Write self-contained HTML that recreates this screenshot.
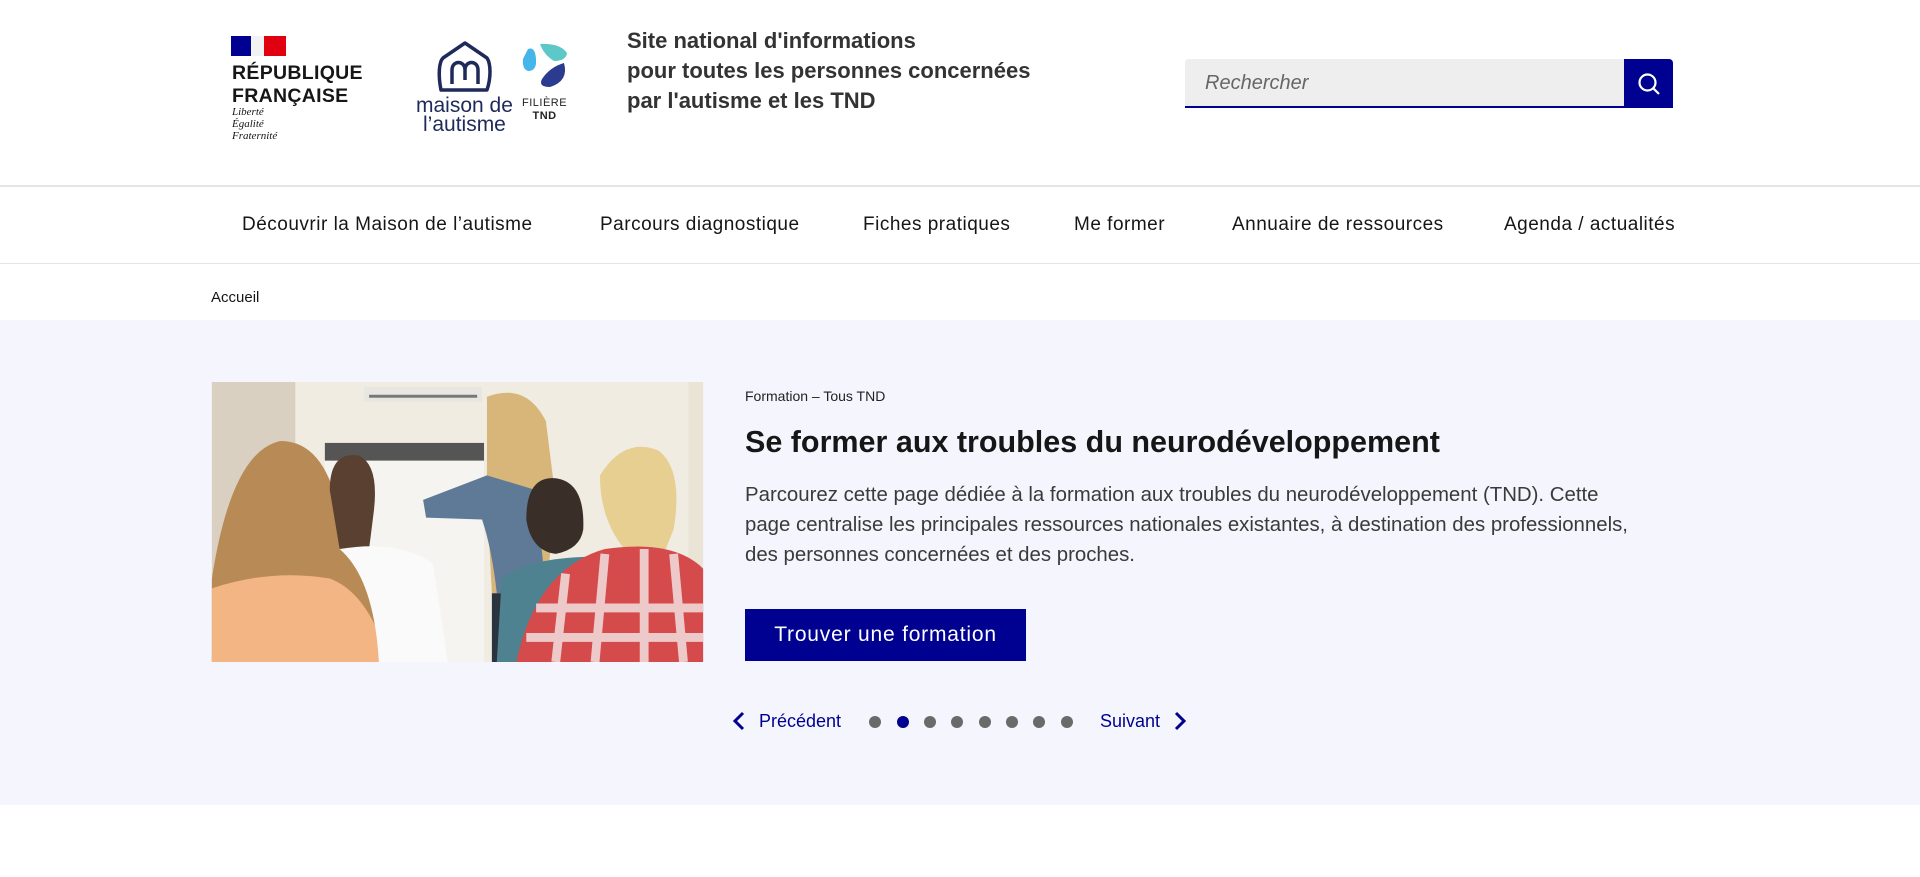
<!DOCTYPE html>
<html><head><meta charset="utf-8"><style>
*{margin:0;padding:0;box-sizing:border-box}
body{width:1920px;height:877px;overflow:hidden;background:#fff;font-family:"Liberation Sans",sans-serif;color:#161616;position:relative}
.a{position:absolute;white-space:nowrap}
.nav{font-size:19px;letter-spacing:.5px;color:#161616;top:214px}
</style></head><body>
<!-- RF logo -->
<div class="a" style="left:231px;top:36px;width:55px;height:20px;background:linear-gradient(90deg,#000091 0 36%,#f2f2f2 36% 60%,#e1000f 60%)"></div>
<div class="a" style="left:232px;top:62px;font-size:19.5px;font-weight:bold;line-height:23px;letter-spacing:0.3px">RÉPUBLIQUE<br>FRANÇAISE</div>
<div class="a" style="left:232px;top:106px;font-family:'Liberation Serif',serif;font-style:italic;font-size:11px;line-height:12px">Liberté<br>Égalité<br>Fraternité</div>
<!-- maison logo -->
<svg class="a" style="left:435px;top:40px" width="60" height="55" viewBox="0 0 60 55"><path d="M6 50 C3 35 4 22 8 18 L30 3 L52 18 C56 24 56 38 52 50 Z" fill="none" stroke="#1e2a5a" stroke-width="3.5" stroke-linejoin="round"/><path d="M17 44 V30 C17 20 30 20 30 30 V40 M30 30 C30 20 43 20 43 30 V44" fill="none" stroke="#1e2a5a" stroke-width="3.5"/></svg>
<div class="a" style="left:416px;top:96px;font-size:21px;line-height:19px;color:#1e2a5a;text-align:center">maison de<br>l’autisme</div>
<svg class="a" style="left:520px;top:41px" width="50" height="50" viewBox="0 0 50 50"><path d="M8 8 Q15 5 16 18 Q17 30 8 30 Q2 28 3 18 Z" fill="#45b5ea"/><path d="M20 3 Q40 2 47 12 Q46 20 34 20 Q24 14 20 3Z" fill="#5cc8c8"/><path d="M44 22 Q49 40 30 46 Q18 46 22 38 Q30 26 44 22Z" fill="#2b3b8f"/></svg>
<div class="a" style="left:522px;top:97px;font-size:11px;line-height:13px;color:#222;text-align:center;letter-spacing:.5px">FILIÈRE<br><b>TND</b></div>
<!-- tagline -->
<div class="a" style="left:627px;top:26px;font-size:22px;line-height:30px;font-weight:bold;color:#333">Site national d'informations<br>pour toutes les personnes concernées<br>par l'autisme et les TND</div>
<!-- search -->
<div class="a" style="left:1185px;top:59px;width:439px;height:49px;background:#eee;border-radius:4px 0 0 0;border-bottom:2px solid #000091"></div>
<div class="a" style="left:1205px;top:72px;font-size:20px;font-style:italic;color:#666">Rechercher</div>
<div class="a" style="left:1624px;top:59px;width:49px;height:49px;background:#000091;border-radius:0 4px 0 0"></div>
<svg class="a" style="left:1636px;top:71px" width="26" height="26" viewBox="0 0 26 26"><circle cx="11.5" cy="11.5" r="8" fill="none" stroke="#fff" stroke-width="2.2"/><path d="M17.5 17.5 L23 23" stroke="#fff" stroke-width="2.2"/></svg>
<!-- nav -->
<div class="a" style="left:0;top:185px;width:1920px;height:2px;background:#e5e5e5"></div>
<div class="a nav" style="left:242px">Découvrir la Maison de l’autisme</div>
<div class="a nav" style="left:600px">Parcours diagnostique</div>
<div class="a nav" style="left:863px">Fiches pratiques</div>
<div class="a nav" style="left:1074px">Me former</div>
<div class="a nav" style="left:1232px">Annuaire de ressources</div>
<div class="a nav" style="left:1504px">Agenda / actualités</div>
<div class="a" style="left:0;top:263px;width:1920px;height:1px;background:#e5e5e5"></div>
<div class="a" style="left:211px;top:289px;font-size:15px">Accueil</div>
<!-- band -->
<div class="a" style="left:0;top:320px;width:1920px;height:485px;background:#f4f5fd"></div>
<svg class="a" style="left:210px;top:382px" width="495" height="280" viewBox="0 0 500 285">
<rect width="500" height="285" fill="#e9e4d6"/>
<rect x="0" y="0" width="85" height="285" fill="#d9d0c2"/>
<rect x="85" y="0" width="400" height="285" fill="#f0ece2"/>
<rect x="155" y="5" width="120" height="15" fill="#e8e6e0"/><rect x="160" y="13" width="110" height="3" fill="#777"/>
<rect x="115" y="80" width="162" height="205" fill="#f5f4f0"/>
<rect x="115" y="62" width="162" height="18" fill="#555"/>
<path d="M280 15 Q320 0 340 40 L350 120 L340 215 L285 215 L280 120 Z" fill="#d8b67a"/>
<path d="M215 120 L280 95 L330 110 L340 215 L290 215 Q285 170 275 140 L218 138 Z" fill="#5e7a96"/>
<path d="M285 215 L330 215 L330 285 L285 285Z" fill="#2a3340"/>
<path d="M0 200 Q20 70 70 60 Q125 60 135 170 Q150 200 175 210 L190 285 L0 285Z" fill="#b88a55"/>
<path d="M0 210 Q60 190 120 200 Q160 215 180 285 L0 285Z" fill="#f3b583"/>
<path d="M120 110 Q120 70 150 75 Q170 85 165 130 L160 170 L130 170 Z" fill="#5a4030"/>
<path d="M130 170 Q190 160 225 185 L240 285 L170 285 Q165 200 130 170Z" fill="#fafafa"/>
<path d="M320 140 Q320 95 350 98 Q380 102 378 150 Q375 170 350 175 Q325 172 320 140Z" fill="#3a2e28"/>
<path d="M295 200 Q320 180 380 178 L395 285 L290 285Z" fill="#4f8290"/>
<path d="M395 95 Q420 55 455 70 Q480 90 470 150 L460 175 L420 170 Q395 140 395 95Z" fill="#e7cf92"/>
<path d="M310 285 Q330 190 400 170 Q470 160 500 190 L500 285Z" fill="#d54a4a"/>
<path d="M330 230 L500 230 M320 260 L500 260 M400 175 L390 285 M440 170 L440 285 M470 175 L480 285 M360 195 L350 285" stroke="#f4e9e9" stroke-width="9" opacity=".8"/>
</svg>
<div class="a" style="left:745px;top:388px;font-size:14px;color:#222">Formation – Tous TND</div>
<div class="a" style="left:745px;top:425px;font-size:30.5px;font-weight:bold;color:#161616">Se former aux troubles du neurodéveloppement</div>
<div class="a" style="left:745px;top:480px;font-size:20.4px;line-height:30px;color:#3a3a3a">Parcourez cette page dédiée à la formation aux troubles du neurodéveloppement (TND). Cette<br>page centralise les principales ressources nationales existantes, à destination des professionnels,<br>des personnes concernées et des proches.</div>
<div class="a" style="left:745px;top:609px;width:281px;height:52px;background:#000091;color:#fff;font-size:21px;line-height:52px;text-align:center;letter-spacing:.8px">Trouver une formation</div>
<!-- controls -->
<svg class="a" style="left:731px;top:711px" width="16" height="20" viewBox="0 0 16 20"><path d="M12 2 L4 10 L12 18" fill="none" stroke="#000091" stroke-width="3"/></svg>
<div class="a" style="left:759px;top:711px;font-size:18px;color:#000091">Précédent</div>
<div class="a" style="left:869px;top:716px;width:12px;height:12px;border-radius:50%;background:#6a6a6a;box-shadow:28px 0 0 #000091,55px 0 0 #6a6a6a,82px 0 0 #6a6a6a,110px 0 0 #6a6a6a,137px 0 0 #6a6a6a,164px 0 0 #6a6a6a,192px 0 0 #6a6a6a"></div>
<div class="a" style="left:1100px;top:711px;font-size:18px;color:#000091">Suivant</div>
<svg class="a" style="left:1172px;top:711px" width="16" height="20" viewBox="0 0 16 20"><path d="M4 2 L12 10 L4 18" fill="none" stroke="#000091" stroke-width="3"/></svg>
</body></html>
